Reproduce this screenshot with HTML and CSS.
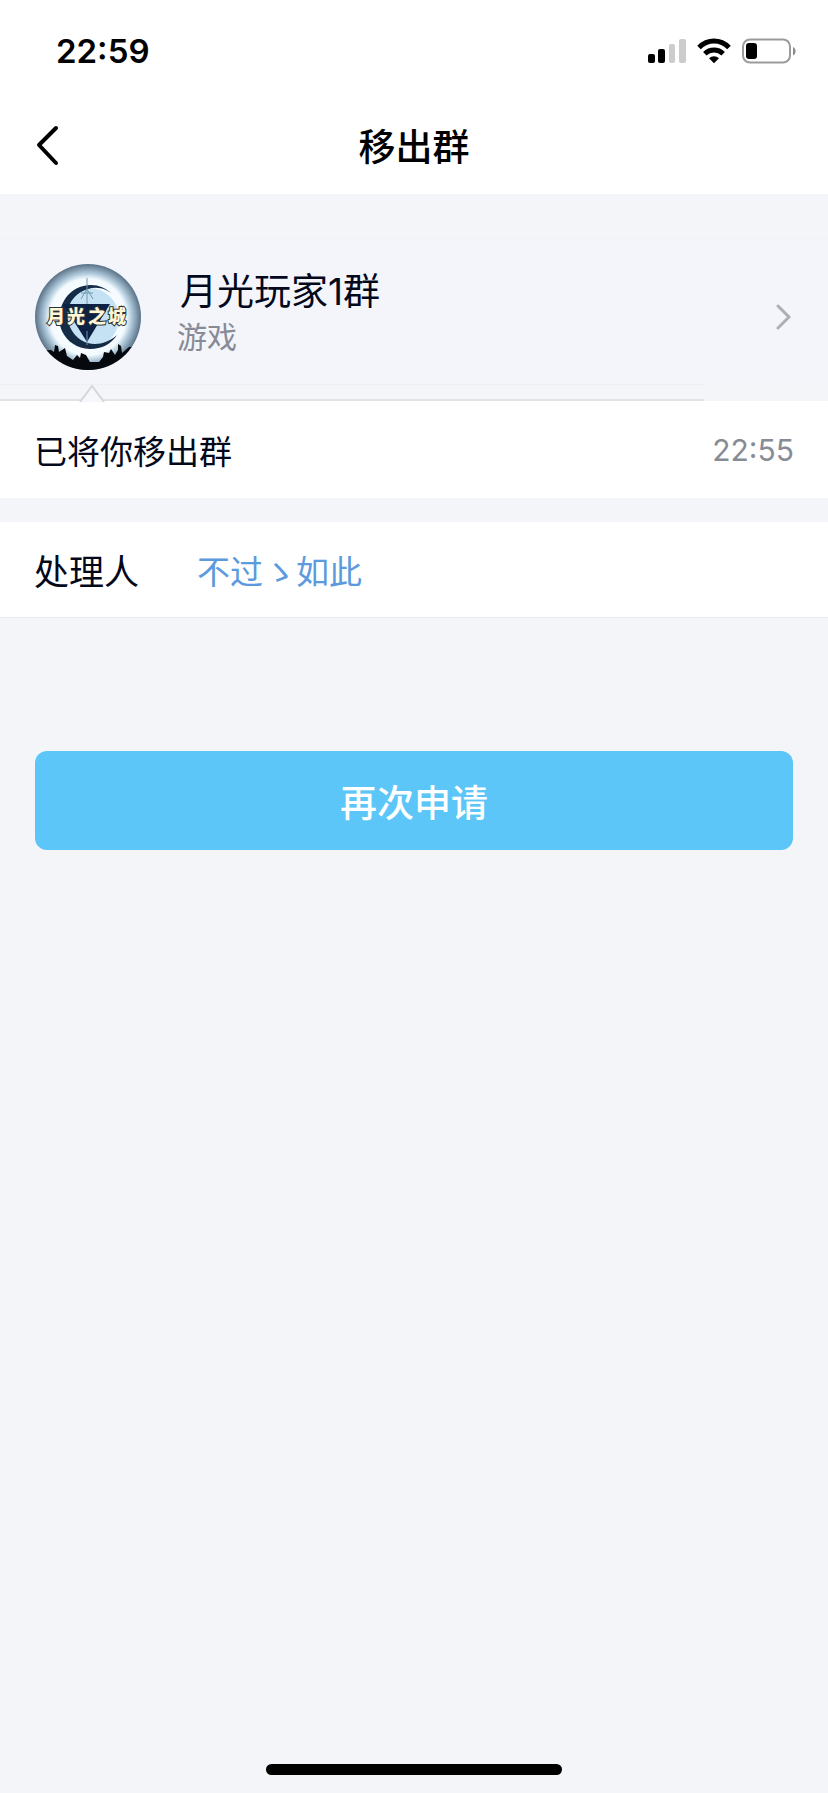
FILE: index.html
```html
<!DOCTYPE html>
<html lang="zh-CN">
<head>
    <meta charset="UTF-8">
    <meta name="viewport" content="width=device-width, initial-scale=1">
    <title>移出群</title>
    <link rel="stylesheet" href="styles.css">
</head>
<body>
<div class="status-bar">
    <span class="clock">22:59</span>
    <div class="status-icons">
        <svg width="38" height="24" viewBox="0 0 38 24">
            <rect x="0" y="15" width="7" height="9" rx="2"/>
            <rect x="10" y="10" width="7" height="14" rx="2"/>
            <rect x="21" y="5" width="6" height="19" rx="2" fill="#cccccc"/>
            <rect x="31" y="0" width="7" height="24" rx="2" fill="#cccccc"/>
        </svg>
        <svg width="34" height="26" viewBox="0 0 34 26" fill="none" stroke="#000" stroke-width="5">
            <path d="M2 9.500C10.500 .8 23.500 .8 32 9.500"/>
            <path d="M7.800 15.800C13 10.800 21 10.800 26.200 15.800"/>
            <path d="M12 20.300C15 17.500 19 17.500 22 20.300L17 25.300Z" fill="#000" stroke="none"/>
        </svg>
        <svg width="54" height="26" viewBox="0 0 54 26">
            <rect x="1" y="1.500" width="47" height="23" rx="7" fill="none" stroke="#9b9b9b" stroke-width="2"/>
            <rect x="4" y="5" width="11" height="16" rx="3"/>
            <path d="M51 9C54.500 10.500 54.500 16 51 17.500Z" fill="#8c8c8c"/>
        </svg>
    </div>
</div>
<header class="header">
    <button type="button" class="back" aria-label="返回">
        <svg width="24" height="42" viewBox="0 0 24 42" fill="none" stroke="#000" stroke-width="4" stroke-linecap="round" stroke-linejoin="round">
            <path d="M20 4L3 21L20 39"/>
        </svg>
    </button>
    <h1 class="title">移出群</h1>
</header>
<main>
    <a href="#" class="group">
        <svg class="avatar" width="106" height="106" viewBox="0 0 106 106">
            <defs>
                <radialGradient id="sky">
                    <stop offset="0" stop-color="#ffffff"/>
                    <stop offset=".72" stop-color="#f4fbff"/>
                    <stop offset=".82" stop-color="#b2cbdc"/>
                    <stop offset="1" stop-color="#5a7288"/>
                </radialGradient>
                <clipPath id="round"><circle cx="53" cy="53" r="53"/></clipPath>
            </defs>
            <g clip-path="url(#round)">
                <rect width="106" height="106" fill="url(#sky)"/>
                <circle cx="54" cy="54" r="30" fill="#c4e2f4"/>
                <path d="M78 31C65 16 41 18 30 35C16 57 29 84 55 85C67 85 76 80 82 71C65 86 44 81 36 65C27 47 37 29 53 25C63 22 72 25 78 31Z" fill="#142c46"/>
                <path d="M28 40H75L52 78Z" fill="#0d2144"/>
                <path d="M52 14V40M46 35L52 25L58 35M46 29H58M52 67V81" fill="none" stroke="#7297ae" stroke-width="1"/>
                <path d="M0 87L16 86L19 88L20 81L23 82L24 88L30 84L32 92L38 96L42 91L45 94L46 89L51 91L55 98L64 98L68 93L69 88L74 89L76 85L80 91L83 86V80L86 82L87 89L94 83L106 82V106H0Z" fill="#060a0e"/>
                <text class="avatar-text" x="12 32 53 73" y="59">月光之城</text>
            </g>
        </svg>
        <div class="group-info">
            <div class="group-name">月光玩家1群</div>
            <div class="group-type">游戏</div>
        </div>
        <svg class="arrow" width="16" height="26" viewBox="0 0 16 26" fill="none" stroke="#acafb7" stroke-width="3" stroke-linecap="round" stroke-linejoin="round">
            <path d="M2 2L13 13L2 24"/>
        </svg>
    </a>
    <div class="divider">
        <svg class="caret" width="26" height="17" viewBox="0 0 26 17">
            <path d="M1 17L13 1L25 17" fill="#f6f7fa" stroke="#d5d7da" stroke-width="2"/>
        </svg>
    </div>
    <section class="row message">
        <span>已将你移出群</span>
        <time class="time">22:55</time>
    </section>
    <section class="row handler">
        <span class="label">处理人</span>
        <a href="#" class="handler-name">不过ゝ如此</a>
    </section>
    <div class="actions">
        <button type="button" class="apply">再次申请</button>
    </div>
</main>
<footer class="footer">
    <div class="home-bar"></div>
</footer>
</body>
</html>
```
FILE: styles.css
```css
* {
    box-sizing: border-box;
}

body {
    margin: 0;
    min-height: 100vh;
    display: flex;
    flex-direction: column;
    background-color: #f3f5f9;
    color: #03081a;
    font-family: "Noto Sans CJK SC", sans-serif;
    font-size: 33px;
}

svg {
    display: block;
    flex: none;
}

a {
    text-decoration: none;
    color: inherit;
}

.status-bar {
    display: flex;
    justify-content: space-between;
    align-items: center;
    height: 102px;
    padding: 0 32px 0 56px;
    background-color: #fff;
}

.clock {
    font-family: Inter, sans-serif;
    font-size: 33px;
    font-weight: 600;
    color: #000;
}

.status-icons {
    display: flex;
    align-items: center;
    gap: 11px;
}

.header {
    display: grid;
    grid-template-columns: 1fr auto 1fr;
    align-items: center;
    height: 92px;
    padding: 0 36px 6px;
    background-color: #fff;
}

.back {
    justify-self: start;
    padding: 0;
    border: none;
    background: none;
    cursor: pointer;
}

.title {
    margin: 0;
    font-size: 37px;
    line-height: 54px;
    font-weight: 500;
    color: #000;
}

.group {
    display: flex;
    align-items: center;
    height: 146px;
    margin-top: 44px;
    padding: 15px 36px 5px 35px;
    border-top: 1px solid #f0f1f4;
    background-color: #f4f5fa;
}

.avatar-text {
    font-size: 18px;
    font-weight: 900;
    fill: #fff6d5;
    stroke: #27323c;
    stroke-width: 2px;
    paint-order: stroke;
}

.group-info {
    flex: 1;
    padding: 0 0 10px 36px;
}

.group-name {
    padding-left: 3px;
    font-family: Inter, "Noto Sans CJK SC", sans-serif;
    font-size: 37px;
    line-height: 46px;
}

.group-type {
    font-size: 30px;
    line-height: 40px;
    color: #878b96;
}

.divider {
    width: 85%;
    height: 17px;
    padding-left: 79px;
    border-top: 1px solid #eceef1;
    border-bottom: 2px solid #e0e2e5;
}

.row {
    display: flex;
    align-items: center;
    padding: 0 34px;
    background-color: #fff;
}

.message {
    justify-content: space-between;
    height: 97px;
}

.time {
    font-family: Inter, sans-serif;
    font-size: 30px;
    color: #878b96;
}

.handler {
    height: 96px;
    margin-top: 24px;
    border-bottom: 1px solid #e8eaee;
}

.label {
    width: 163px;
    font-size: 35px;
}

.handler-name {
    color: #5c9add;
}

.actions {
    padding: 133px 35px 0;
}

.apply {
    width: 100%;
    height: 99px;
    padding: 0;
    border: none;
    border-radius: 12px;
    background-color: #5bc6f7;
    color: #fff;
    font-family: inherit;
    font-size: 37px;
    font-weight: 500;
    cursor: pointer;
}

.footer {
    display: flex;
    justify-content: center;
    margin-top: auto;
    padding: 20px 0 18px;
}

.home-bar {
    width: 296px;
    height: 11px;
    border-radius: 6px;
    background-color: #000;
}
```
